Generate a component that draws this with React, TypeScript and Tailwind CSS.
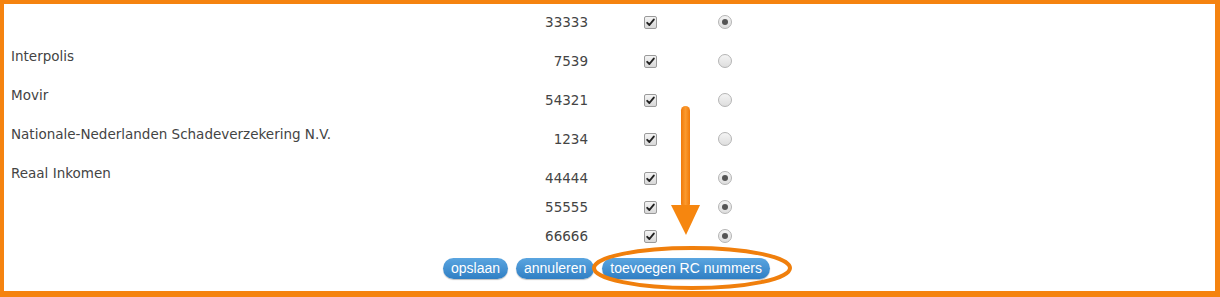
import React from 'react';

type Row = { nr: string; on: boolean };
type Group = { label: string; rows: Row[] };

const groups: Group[] = [
  { label: '', rows: [{ nr: '33333', on: true }] },
  { label: 'Interpolis', rows: [{ nr: '7539', on: false }] },
  { label: 'Movir', rows: [{ nr: '54321', on: false }] },
  { label: 'Nationale-Nederlanden Schadeverzekering N.V.', rows: [{ nr: '1234', on: false }] },
  {
    label: 'Reaal Inkomen',
    rows: [
      { nr: '44444', on: true },
      { nr: '55555', on: true },
      { nr: '66666', on: true },
    ],
  },
];

function Check() {
  return (
    <span className="flex h-[13px] w-[13px] items-center justify-center rounded-[2px] border border-[#9a9a9a] bg-gradient-to-b from-[#f4f4f4] to-[#d8d8d8]">
      <svg width="9" height="9" viewBox="0 0 9 9">
        <path d="M1.2 4.8 L3.4 7 L7.8 1.6" fill="none" stroke="#222" strokeWidth="1.9" strokeLinecap="round" strokeLinejoin="round" />
      </svg>
    </span>
  );
}

function Radio({ on }: { on: boolean }) {
  return (
    <span className="flex h-[14px] w-[14px] items-center justify-center rounded-full border border-[#b4b4b4] bg-gradient-to-b from-[#f4f4f4] to-[#dedede]">
      {on && <span className="h-[6px] w-[6px] rounded-full bg-[#555]" />}
    </span>
  );
}

function Btn({ children }: { children: React.ReactNode }) {
  return (
    <button className="h-[21px] rounded-full bg-gradient-to-b from-[#5aa5e0] to-[#2f7fc4] px-[8px] text-[14px] leading-[21px] text-white shadow-[0_1px_1px_rgba(0,0,0,0.25)] [font-family:'Liberation_Sans',Arial,sans-serif]">
      {children}
    </button>
  );
}

export default function App() {
  return (
    <div className="relative h-[297px] w-[1220px] overflow-hidden border-t-[4px] border-r-[5px] border-b-[6px] border-l-[4px] border-[#f5830f] bg-white text-[13.5px] text-[#444] [font-family:'DejaVu_Sans',Verdana,sans-serif]">
      <div className="flex flex-col pl-[7px] pt-[3.5px]">
        {groups.map((g, gi) => (
          <div key={gi} className={gi === 0 ? 'flex' : 'mt-[10px] flex'}>
            <div className="w-[500px] pt-[1px] leading-[17px]">{g.label}</div>
            <div className="flex flex-col">
              {g.rows.map((r) => (
                <div key={r.nr} className="flex h-[29px] items-center">
                  <div className="w-[77px] text-right">{r.nr}</div>
                  <div className="flex w-[124px] justify-center">
                    <Check />
                  </div>
                  <div className="flex w-[26px] justify-center">
                    <Radio on={r.on} />
                  </div>
                </div>
              ))}
            </div>
          </div>
        ))}
      </div>
      <div className="mt-[7px] flex justify-center gap-[8px] pr-[6px]">
        <Btn>opslaan</Btn>
        <Btn>annuleren</Btn>
        <Btn>toevoegen RC nummers</Btn>
      </div>

      {/* annotation overlay: arrow + ellipse */}
      <svg className="pointer-events-none absolute -left-[4px] -top-[4px]" width="1220" height="297" viewBox="0 0 1220 297">
        <defs>
          <linearGradient id="sh" x1="0" x2="1">
            <stop offset="0" stopColor="#f07a0a" />
            <stop offset="0.5" stopColor="#fb9a2e" />
            <stop offset="1" stopColor="#f07a0a" />
          </linearGradient>
        </defs>
        <rect x="681" y="106" width="9" height="102" rx="4.5" fill="url(#sh)" />
        <path d="M671 205 L700 205 L686 235 Z" fill="#f6860f" />
        <ellipse cx="692" cy="268" rx="98" ry="20" fill="none" stroke="#f07f0c" strokeWidth="4" />
      </svg>
    </div>
  );
}
